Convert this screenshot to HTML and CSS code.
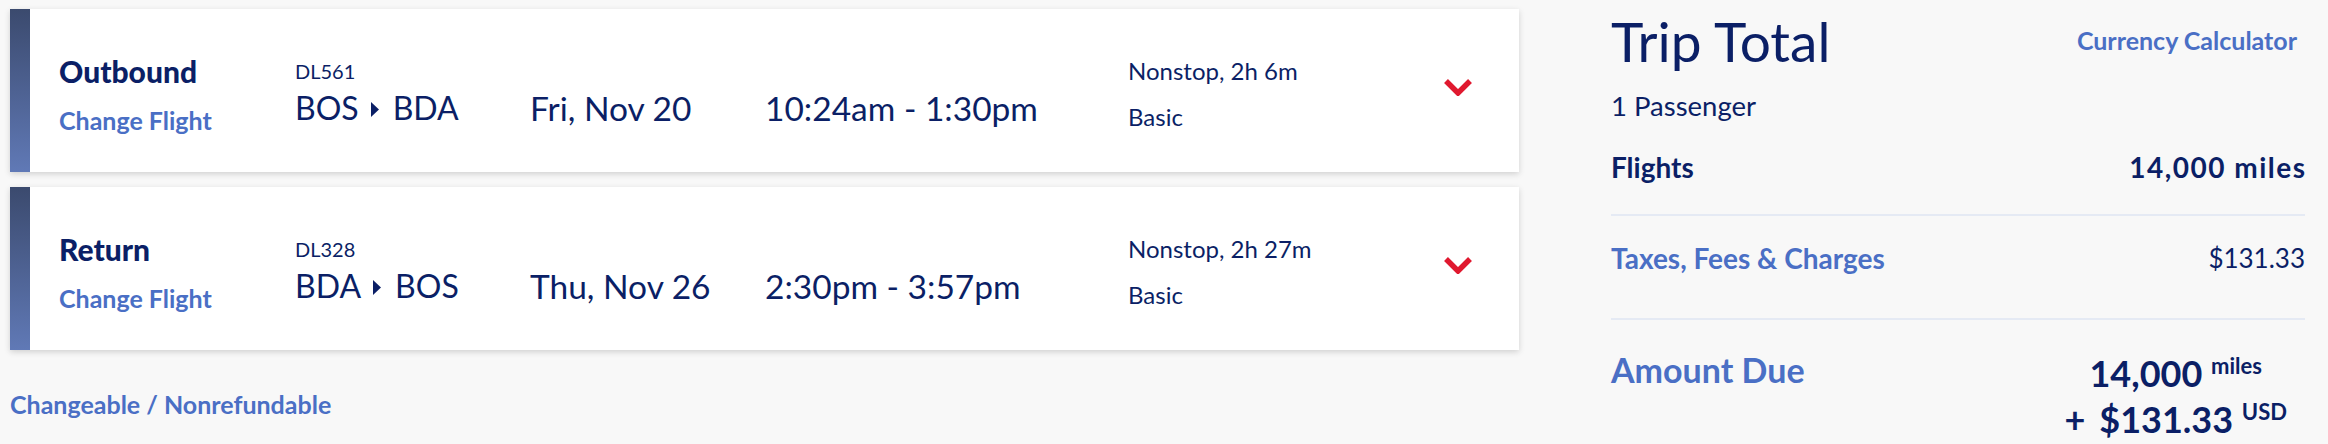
FILE: index.html
```html
<!DOCTYPE html>
<html lang="en">
<head>
<meta charset="utf-8">
<title>Trip Summary</title>
<link rel="stylesheet" href="styles.css">
</head>
<body>
<div class="page">
  <div class="flights">
    <div class="card">
      <div class="accent"></div>
      <div class="col-label">
        <div class="dir">Outbound</div>
        <a class="link change">Change Flight</a>
      </div>
      <div class="col-flight">
        <div class="fnum">DL561</div>
        <div class="big route">BOS<svg class="tri" width="10" height="15" viewBox="0 0 10 15"><path d="M1 0 L9 7.5 L1 15 Z" fill="#0b1f66"/></svg>BDA</div>
      </div>
      <div class="col-date big2">Fri, Nov 20</div>
      <div class="col-time big2">10:24am - 1:30pm</div>
      <div class="col-info">
        <div class="stops">Nonstop, 2h 6m</div>
        <div class="fare">Basic</div>
      </div>
      <div class="col-chev">
        <svg width="28" height="17" viewBox="0 0 28 17"><path d="M2 2 L14 14 L26 2" fill="none" stroke="#e0192f" stroke-width="5.5" stroke-linejoin="miter"/></svg>
      </div>
    </div>
    <div class="card">
      <div class="accent"></div>
      <div class="col-label">
        <div class="dir">Return</div>
        <a class="link change">Change Flight</a>
      </div>
      <div class="col-flight">
        <div class="fnum">DL328</div>
        <div class="big route">BDA<svg class="tri" width="10" height="15" viewBox="0 0 10 15"><path d="M1 0 L9 7.5 L1 15 Z" fill="#0b1f66"/></svg>BOS</div>
      </div>
      <div class="col-date big2">Thu, Nov 26</div>
      <div class="col-time big2">2:30pm - 3:57pm</div>
      <div class="col-info">
        <div class="stops">Nonstop, 2h 27m</div>
        <div class="fare">Basic</div>
      </div>
      <div class="col-chev">
        <svg width="28" height="17" viewBox="0 0 28 17"><path d="M2 2 L14 14 L26 2" fill="none" stroke="#e0192f" stroke-width="5.5" stroke-linejoin="miter"/></svg>
      </div>
    </div>
    <a class="link policy">Changeable / Nonrefundable</a>
  </div>

  <div class="summary">
    <div class="sum-head">
      <h1 class="title">Trip Total</h1>
      <a class="link calc">Currency Calculator</a>
    </div>
    <div class="pax">1 Passenger</div>
    <div class="row row-flights">
      <span class="strong">Flights</span>
      <span class="strong num">14,000 miles</span>
    </div>
    <div class="row row-taxes">
      <a class="link taxes">Taxes, Fees &amp; Charges</a>
      <span class="plain">$131.33</span>
    </div>
    <div class="row row-due">
      <span class="link due">Amount Due</span>
      <div class="due-amt">
        <div class="amt-line">14,000 <sup class="unit">miles</sup></div>
        <div class="amt-line"><span class="plus">+</span>$131.33 <sup class="unit">USD</sup></div>
      </div>
    </div>
  </div>
</div>
</body>
</html>
```
FILE: styles.css
```css
* { box-sizing: border-box; }
html, body { margin: 0; padding: 0; }
body {
  background: #f8f8f8;
  font-family: "Lato", "Open Sans", "Liberation Sans", sans-serif;
  color: #0b1f66;
  overflow: hidden;
}
.page {
  display: flex;
  gap: 92px;
  padding: 9px 23px 0 10px;
}
.flights {
  width: 1509px;
  flex: none;
  display: flex;
  flex-direction: column;
  gap: 15px;
}
.card {
  height: 163px;
  background: #fff;
  display: flex;
  align-items: flex-start;
  box-shadow: 0 2px 6px rgba(0, 0, 0, 0.16);
}
.accent {
  width: 20px;
  align-self: stretch;
  background: linear-gradient(to bottom, #3b4a6e, #6079b6);
  margin-right: 29px;
}
.link {
  color: #4a6fc5;
  font-weight: 700;
  text-decoration: none;
}
.col-label {
  width: 236px;
  margin-top: 44px;
  display: flex;
  flex-direction: column;
}
.dir {
  font-size: 30px;
  line-height: 36px;
  font-weight: 900;
}
.change {
  font-size: 25px;
  line-height: 30px;
  margin-top: 16px;
}
.col-flight {
  width: 235px;
  margin-top: 50px;
}
.fnum {
  font-size: 20px;
  line-height: 25px;
}
.big {
  font-size: 32px;
  line-height: 38px;
}
.big2 {
  font-size: 33.5px;
  line-height: 38px;
}
.route {
  margin-top: 5px;
  display: flex;
  align-items: center;
}
.tri { margin: 2px 13px 0 11px; }
.col-date {
  width: 235px;
  margin-top: 80px;
}
.col-time {
  width: 363px;
  margin-top: 80px;
}
.col-info {
  width: 316px;
  margin-top: 47px;
  font-size: 24px;
  line-height: 30px;
}
.fare { margin-top: 16px; }
.col-chev {
  margin-top: 70px;
  line-height: 0;
}
.policy {
  margin-top: 23px;
  font-size: 25px;
  line-height: 32px;
}

.summary {
  flex: 1;
  min-width: 0;
}
.sum-head {
  display: flex;
  justify-content: space-between;
  align-items: flex-start;
}
.title {
  margin: 1px 0 0;
  font-size: 55px;
  line-height: 62px;
  font-weight: 400;
}
.calc {
  margin-top: 16px;
  margin-right: 8px;
  font-size: 25px;
  line-height: 30px;
}
.pax {
  margin-top: 18px;
  font-size: 27.5px;
  line-height: 32px;
}
.row {
  display: flex;
  justify-content: space-between;
  align-items: flex-start;
}
.row-flights {
  margin-top: 29px;
  padding-bottom: 31px;
  border-bottom: 2px solid #e5eaf4;
}
.strong {
  font-size: 28px;
  line-height: 32px;
  font-weight: 700;
}
.num { letter-spacing: 1.5px; margin-right: -1.5px; }
.row-taxes {
  padding-top: 27px;
  padding-bottom: 45px;
  border-bottom: 2px solid #e5eaf4;
}
.taxes {
  font-size: 28px;
  line-height: 30px;
}
.plain {
  font-size: 26px;
  line-height: 30px;
}
.row-due {
  padding-top: 30px;
}
.due {
  font-size: 34px;
  line-height: 40px;
}
.due-amt {
  margin-right: 18px;
  text-align: center;
  font-weight: 700;
  font-size: 36px;
  line-height: 46px;
}
.amt-line { white-space: nowrap; }
.plus { margin-right: 14px; }
.unit {
  font-size: 22px;
  vertical-align: 13px;
  line-height: 0;
}
```
